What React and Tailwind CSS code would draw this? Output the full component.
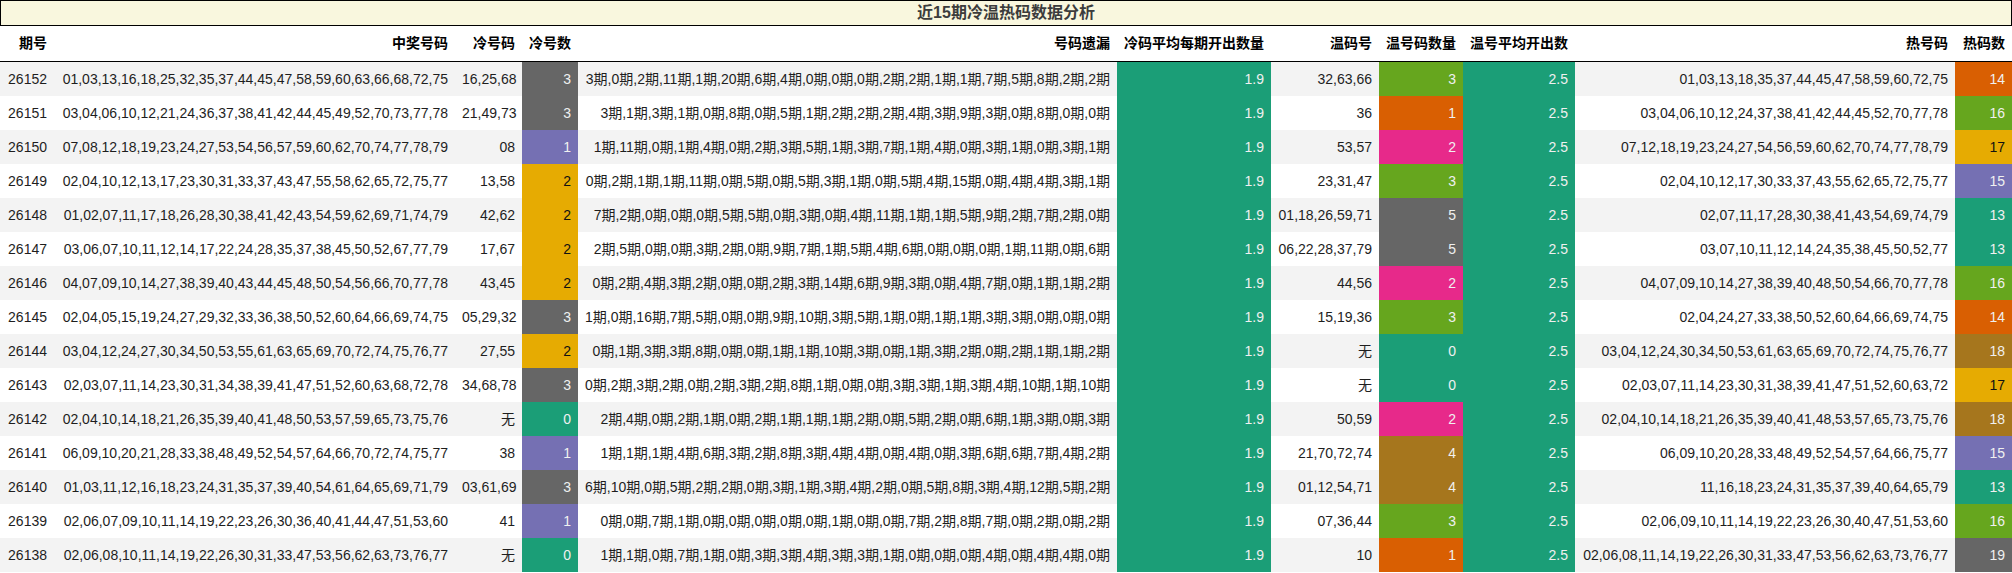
import React from "react";

const C = {
  teal: "bg-[#1b9e77] text-[#f0f0f0]",
  orange: "bg-[#d95f02] text-[#f0f0f0]",
  purple: "bg-[#7570b3] text-[#f0f0f0]",
  pink: "bg-[#e7298a] text-[#f0f0f0]",
  green: "bg-[#66a61e] text-[#f0f0f0]",
  gold: "bg-[#e6ab02] text-[#111111]",
  brown: "bg-[#a6761d] text-[#f0f0f0]",
  gray: "bg-[#666666] text-[#f0f0f0]",
};

const coldMap = { 0: "teal", 1: "purple", 2: "gold", 3: "gray" };
const warmMap = { 0: "teal", 1: "orange", 2: "pink", 3: "green", 4: "brown", 5: "gray" };
const hotMap = { 13: "teal", 14: "orange", 15: "purple", 16: "green", 17: "gold", 18: "brown", 19: "gray" };

const rows = [
  ["26152", "01,03,13,16,18,25,32,35,37,44,45,47,58,59,60,63,66,68,72,75", "16,25,68", 3, "3期,0期,2期,11期,1期,20期,6期,4期,0期,0期,0期,2期,2期,1期,1期,7期,5期,8期,2期,2期", "32,63,66", 3, "01,03,13,18,35,37,44,45,47,58,59,60,72,75", 14],
  ["26151", "03,04,06,10,12,21,24,36,37,38,41,42,44,45,49,52,70,73,77,78", "21,49,73", 3, "3期,1期,3期,1期,0期,8期,0期,5期,1期,2期,2期,2期,4期,3期,9期,3期,0期,8期,0期,0期", "36", 1, "03,04,06,10,12,24,37,38,41,42,44,45,52,70,77,78", 16],
  ["26150", "07,08,12,18,19,23,24,27,53,54,56,57,59,60,62,70,74,77,78,79", "08", 1, "1期,11期,0期,1期,4期,0期,2期,3期,5期,1期,3期,7期,1期,4期,0期,3期,1期,0期,3期,1期", "53,57", 2, "07,12,18,19,23,24,27,54,56,59,60,62,70,74,77,78,79", 17],
  ["26149", "02,04,10,12,13,17,23,30,31,33,37,43,47,55,58,62,65,72,75,77", "13,58", 2, "0期,2期,1期,1期,11期,0期,5期,0期,5期,3期,1期,0期,5期,4期,15期,0期,4期,4期,3期,1期", "23,31,47", 3, "02,04,10,12,17,30,33,37,43,55,62,65,72,75,77", 15],
  ["26148", "01,02,07,11,17,18,26,28,30,38,41,42,43,54,59,62,69,71,74,79", "42,62", 2, "7期,2期,0期,0期,0期,5期,5期,0期,3期,0期,4期,11期,1期,1期,5期,9期,2期,7期,2期,0期", "01,18,26,59,71", 5, "02,07,11,17,28,30,38,41,43,54,69,74,79", 13],
  ["26147", "03,06,07,10,11,12,14,17,22,24,28,35,37,38,45,50,52,67,77,79", "17,67", 2, "2期,5期,0期,0期,3期,2期,0期,9期,7期,1期,5期,4期,6期,0期,0期,0期,1期,11期,0期,6期", "06,22,28,37,79", 5, "03,07,10,11,12,14,24,35,38,45,50,52,77", 13],
  ["26146", "04,07,09,10,14,27,38,39,40,43,44,45,48,50,54,56,66,70,77,78", "43,45", 2, "0期,2期,4期,3期,2期,0期,0期,2期,3期,14期,6期,9期,3期,0期,4期,7期,0期,1期,1期,2期", "44,56", 2, "04,07,09,10,14,27,38,39,40,48,50,54,66,70,77,78", 16],
  ["26145", "02,04,05,15,19,24,27,29,32,33,36,38,50,52,60,64,66,69,74,75", "05,29,32", 3, "1期,0期,16期,7期,5期,0期,0期,9期,10期,3期,5期,1期,0期,1期,1期,3期,3期,0期,0期,0期", "15,19,36", 3, "02,04,24,27,33,38,50,52,60,64,66,69,74,75", 14],
  ["26144", "03,04,12,24,27,30,34,50,53,55,61,63,65,69,70,72,74,75,76,77", "27,55", 2, "0期,1期,3期,3期,8期,0期,0期,1期,1期,10期,3期,0期,1期,3期,2期,0期,2期,1期,1期,2期", "无", 0, "03,04,12,24,30,34,50,53,61,63,65,69,70,72,74,75,76,77", 18],
  ["26143", "02,03,07,11,14,23,30,31,34,38,39,41,47,51,52,60,63,68,72,78", "34,68,78", 3, "0期,2期,3期,2期,0期,2期,3期,2期,8期,1期,0期,0期,3期,3期,1期,3期,4期,10期,1期,10期", "无", 0, "02,03,07,11,14,23,30,31,38,39,41,47,51,52,60,63,72", 17],
  ["26142", "02,04,10,14,18,21,26,35,39,40,41,48,50,53,57,59,65,73,75,76", "无", 0, "2期,4期,0期,2期,1期,0期,2期,1期,1期,1期,2期,0期,5期,2期,0期,6期,1期,3期,0期,3期", "50,59", 2, "02,04,10,14,18,21,26,35,39,40,41,48,53,57,65,73,75,76", 18],
  ["26141", "06,09,10,20,21,28,33,38,48,49,52,54,57,64,66,70,72,74,75,77", "38", 1, "1期,1期,1期,4期,6期,3期,2期,8期,3期,4期,4期,0期,4期,0期,3期,6期,6期,7期,4期,2期", "21,70,72,74", 4, "06,09,10,20,28,33,48,49,52,54,57,64,66,75,77", 15],
  ["26140", "01,03,11,12,16,18,23,24,31,35,37,39,40,54,61,64,65,69,71,79", "03,61,69", 3, "6期,10期,0期,5期,2期,2期,0期,3期,1期,3期,4期,2期,0期,5期,8期,3期,4期,12期,5期,2期", "01,12,54,71", 4, "11,16,18,23,24,31,35,37,39,40,64,65,79", 13],
  ["26139", "02,06,07,09,10,11,14,19,22,23,26,30,36,40,41,44,47,51,53,60", "41", 1, "0期,0期,7期,1期,0期,0期,0期,0期,0期,1期,0期,0期,7期,2期,8期,7期,0期,2期,0期,2期", "07,36,44", 3, "02,06,09,10,11,14,19,22,23,26,30,40,47,51,53,60", 16],
  ["26138", "02,06,08,10,11,14,19,22,26,30,31,33,47,53,56,62,63,73,76,77", "无", 0, "1期,1期,0期,7期,1期,0期,3期,3期,4期,3期,3期,1期,0期,0期,0期,4期,0期,4期,4期,0期", "10", 1, "02,06,08,11,14,19,22,26,30,31,33,47,53,56,62,63,73,76,77", 19],
];

const headers = ["期号", "中奖号码", "冷号码", "冷号数", "号码遗漏", "冷码平均每期开出数量", "温码号", "温号码数量", "温号平均开出数", "热号码", "热码数"];

const grid = "grid grid-cols-[54px_401px_67px_56px_539px_154px_108px_84px_112px_380px_57px]";

function Cell({ children, cls = "" }) {
  return (
    <div className={`px-[7px] text-right whitespace-nowrap overflow-visible h-[34px] leading-[34px] ${cls}`}>
      {children}
    </div>
  );
}

export default function App() {
  return (
    <div className="w-[2012px] bg-white font-['Liberation_Sans','Noto_Sans_CJK_SC',sans-serif] text-[14px] text-[#1e1e1e]">
      <div className="h-[26px] border border-black bg-[#f9f7de] flex items-center justify-center text-[16px] font-bold text-[#3c3c3c] leading-none">
        近15期冷温热码数据分析
      </div>
      <div className={`${grid} h-[36px] border-b border-black items-center font-bold text-black`}>
        {headers.map((h) => (
          <div key={h} className="px-[7px] text-right whitespace-nowrap">{h}</div>
        ))}
      </div>
      {rows.map((r, i) => (
        <div key={r[0]} className={`${grid} ${i % 2 === 0 ? "bg-[#f3f3f3]" : "bg-white"}`}>
          <Cell>{r[0]}</Cell>
          <Cell>{r[1]}</Cell>
          <Cell>{r[2]}</Cell>
          <Cell cls={C[coldMap[r[3]]]}>{r[3]}</Cell>
          <Cell>{r[4]}</Cell>
          <Cell cls={C.teal}>1.9</Cell>
          <Cell>{r[5]}</Cell>
          <Cell cls={C[warmMap[r[6]]]}>{r[6]}</Cell>
          <Cell cls={C.teal}>2.5</Cell>
          <Cell>{r[7]}</Cell>
          <Cell cls={C[hotMap[r[8]]]}>{r[8]}</Cell>
        </div>
      ))}
    </div>
  );
}
